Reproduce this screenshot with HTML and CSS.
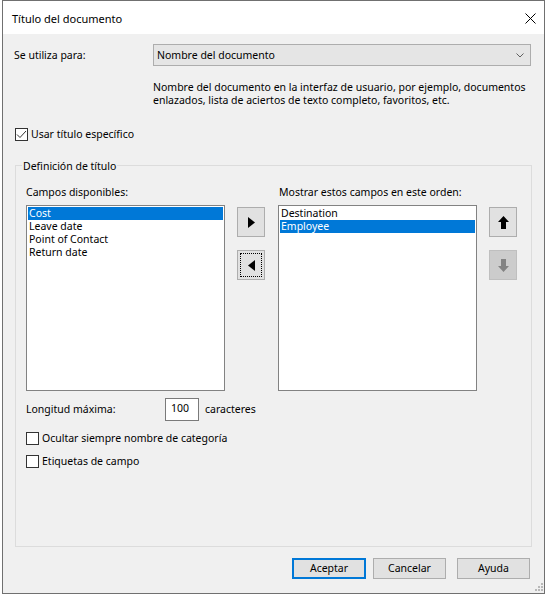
FILE: index.html
```html
<!DOCTYPE html>
<html lang="es">
<head>
<meta charset="utf-8">
<title>Título del documento</title>
<link rel="stylesheet" href="styles.css">
</head>
<body>
<div class="window">
  <div class="titlebar">
    <span class="title">Título del documento</span>
    <svg class="close" width="11" height="11" viewBox="0 0 11 11"><path d="M0.5 0.5 L10.5 10.5 M10.5 0.5 L0.5 10.5" stroke="#000" stroke-width="1" fill="none"/></svg>
  </div>
  <div class="content">
    <div class="use-row">
      <span class="use-label">Se utiliza para:</span>
      <div class="select">
        <span>Nombre del documento</span>
        <svg class="chev" width="8" height="5" viewBox="0 0 8 5"><path d="M0.5 0.5 L4 4 L7.5 0.5" stroke="#606060" stroke-width="1" fill="none"/></svg>
      </div>
    </div>
    <div class="desc">Nombre del documento en la interfaz de usuario, por ejemplo, documentos<br>enlazados, lista de aciertos de texto completo, favoritos, etc.</div>
    <div class="check-row top-check">
      <span class="checkbox"><svg width="11" height="11" viewBox="0 0 11 11"><path d="M1 5.5 L4 8.5 L10 2" stroke="#333" stroke-width="1" fill="none"/></svg></span>
      <span class="check-label">Usar título específico</span>
    </div>
    <div class="group">
      <span class="group-title">Definición de título</span>
      <div class="lists">
        <div class="col">
          <div class="col-label">Campos disponibles:</div>
          <div class="listbox">
            <div class="item selected">Cost</div>
            <div class="item">Leave date</div>
            <div class="item">Point of Contact</div>
            <div class="item">Return date</div>
          </div>
        </div>
        <div class="btn-col move-col">
          <div class="sq-btn"><svg width="7" height="11" viewBox="0 0 7 11"><path d="M0 0 L7 5.5 L0 11 Z" fill="#000"/></svg></div>
          <div class="sq-btn focused"><svg width="7" height="11" viewBox="0 0 7 11"><path d="M7 0 L0 5.5 L7 11 Z" fill="#000"/></svg></div>
        </div>
        <div class="col right-col">
          <div class="col-label">Mostrar estos campos en este orden:</div>
          <div class="listbox">
            <div class="item">Destination</div>
            <div class="item selected">Employee</div>
          </div>
        </div>
        <div class="btn-col order-col">
          <div class="sq-btn"><svg width="11" height="13" viewBox="0 0 11 13"><path d="M5.5 0 L11 6 L8 6 L8 13 L3 13 L3 6 L0 6 Z" fill="#000"/></svg></div>
          <div class="sq-btn disabled"><svg width="11" height="13" viewBox="0 0 11 13"><path d="M5.5 13 L11 7 L8 7 L8 0 L3 0 L3 7 L0 7 Z" fill="#838383"/></svg></div>
        </div>
      </div>
      <div class="len-row">
        <span class="len-label">Longitud máxima:</span>
        <span class="len-input">100</span>
        <span class="len-unit">caracteres</span>
      </div>
      <div class="check-row group-check first">
        <span class="checkbox"></span>
        <span class="check-label">Ocultar siempre nombre de categoría</span>
      </div>
      <div class="check-row group-check second">
        <span class="checkbox"></span>
        <span class="check-label">Etiquetas de campo</span>
      </div>
    </div>
    <div class="buttons">
      <div class="btn default">Aceptar</div>
      <div class="btn cancel">Cancelar</div>
      <div class="btn help">Ayuda</div>
    </div>
    <svg class="grip" width="8" height="8" viewBox="0 0 8 8">
      <rect x="6" y="0" width="2" height="2" fill="#b8b8b8"/>
      <rect x="3" y="3" width="2" height="2" fill="#b8b8b8"/>
      <rect x="6" y="3" width="2" height="2" fill="#b8b8b8"/>
      <rect x="0" y="6" width="2" height="2" fill="#b8b8b8"/>
      <rect x="3" y="6" width="2" height="2" fill="#b8b8b8"/>
      <rect x="6" y="6" width="2" height="2" fill="#b8b8b8"/>
    </svg>
  </div>
</div>
</body>
</html>
```
FILE: styles.css
```css
* { box-sizing: border-box; }
html, body { margin: 0; padding: 0; background: #ffffff; }
body {
  font-family: "Noto Sans", "Open Sans", sans-serif;
  font-size: 10.5px;
  color: #000;
}
.window {
  margin-left: 2px;
  width: 543px;
  height: 594px;
  border: 1px solid #707070;
  display: flex;
  flex-direction: column;
}
.titlebar {
  height: 33px;
  background: #ffffff;
  display: flex;
  align-items: center;
  justify-content: space-between;
  padding: 0 8px 0 9px;
  font-size: 11px;
}
.title { padding-top: 1px; }
.close { display: block; margin-top: 1px; }
.content {
  flex: 1;
  background: #f0f0f0;
  position: relative;
  display: flex;
  flex-direction: column;
  line-height: 15px;
}
.use-row {
  margin-top: 10px;
  display: flex;
  align-items: center;
  height: 22px;
}
.use-label { width: 150px; padding-left: 11px; }
.select {
  width: 378px;
  height: 22px;
  background: #e5e5e5;
  border: 1px solid #adadad;
  display: flex;
  align-items: center;
  justify-content: space-between;
  padding: 0 6px 0 3px;
}
.chev { display: block; }
.desc {
  margin-top: 15px;
  margin-left: 150px;
  line-height: 13px;
}
.check-row {
  display: flex;
  align-items: center;
  height: 13px;
}
.top-check { margin-top: 21px; padding-left: 12px; }
.checkbox {
  width: 13px;
  height: 13px;
  border: 1px solid #333333;
  background: #ffffff;
  display: flex;
  align-items: center;
  justify-content: center;
}
.checkbox svg { display: block; }
.check-label { margin-left: 3px; }
.group {
  position: relative;
  margin-top: 24px;
  margin-left: 12px;
  width: 517px;
  height: 382px;
  border: 1px solid #dcdcdc;
  display: flex;
  flex-direction: column;
}
.group-title {
  position: absolute;
  top: -7px;
  left: 6px;
  padding: 0 1px;
  background: #f0f0f0;
  line-height: 15px;
}
.lists {
  margin-top: 18px;
  margin-left: 10px;
  display: flex;
}
.col { width: 199px; display: flex; flex-direction: column; }
.col-label { height: 21px; line-height: 15px; padding-top: 1px; }
.right-col { margin-left: 13px; }
.right-col .col-label { padding-left: 1px; }
.listbox {
  height: 186px;
  background: #ffffff;
  border: 1px solid #828282;
  padding: 1px;
}
.item {
  height: 13px;
  line-height: 13px;
  padding-left: 1px;
}
.item.selected { background: #0078d7; color: #ffffff; }
.btn-col {
  width: 28px;
  margin-left: 12px;
  padding-top: 23px;
  display: flex;
  flex-direction: column;
  gap: 13px;
}
.sq-btn {
  width: 28px;
  height: 30px;
  background: #e1e1e1;
  border: 1px solid #adadad;
  display: flex;
  align-items: center;
  justify-content: center;
}
.sq-btn svg { display: block; }
.sq-btn.focused { outline: 1px dotted #000; outline-offset: -4px; }
.sq-btn.disabled { background: #cccccc; border-color: #bfbfbf; }
.len-row {
  margin-top: 7px;
  margin-left: 10px;
  display: flex;
  align-items: center;
  height: 23px;
}
.len-label { width: 139px; }
.len-input {
  width: 34px;
  height: 23px;
  background: #ffffff;
  border: 1px solid #7a7a7a;
  padding-left: 5px;
  line-height: 19px;
}
.len-unit { margin-left: 6px; }
.group-check { margin-left: 10px; }
.group-check.first { margin-top: 11px; }
.group-check.second { margin-top: 10px; }
.buttons {
  margin-top: 11px;
  display: flex;
  justify-content: flex-end;
  padding-right: 14px;
}
.btn {
  height: 21px;
  width: 73px;
  background: #e1e1e1;
  border: 1px solid #adadad;
  display: flex;
  align-items: center;
  justify-content: center;
}
.btn.default { width: 74px; border: 2px solid #0078d7; }
.btn.cancel { margin-left: 7px; }
.btn.help { margin-left: 11px; }
.grip { position: absolute; right: 1px; bottom: 2px; display: block; }
```
